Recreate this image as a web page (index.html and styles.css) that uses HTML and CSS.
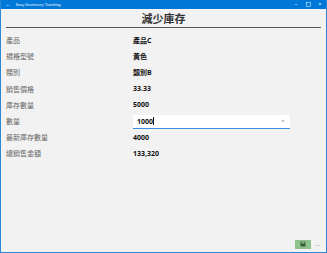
FILE: index.html
```html
<!doctype html>
<html>

<head>
	<meta charset="UTF-8">
	<title>減少庫存</title>
	<link rel="stylesheet" href="styles.css">
</head>

<body>
	<div class="window">
		<div class="titlebar">
			<span class="back">&#8592;</span>
			<span class="app_name">Easy Inventory Tracking</span>
			<span class="caption_btns">
				<span class="cap">&#8211;</span>
				<span class="cap"><svg width="5" height="5" viewBox="0 0 10 10"><rect x="1" y="1" width="8" height="8" fill="none" stroke="#fff" stroke-width="1"/></svg></span>
				<span class="cap">&#215;</span>
			</span>
		</div>
		<div class="page">
			<h2>減少庫存</h2>
			<div class="rows">
				<div class="row"><span class="lbl">產品</span><span class="val">產品C</span></div>
				<div class="row"><span class="lbl">規格型號</span><span class="val">黃色</span></div>
				<div class="row"><span class="lbl">類別</span><span class="val">類別B</span></div>
				<div class="row"><span class="lbl">銷售價格</span><span class="val">33.33</span></div>
				<div class="row"><span class="lbl">庫存數量</span><span class="val">5000</span></div>
				<div class="row"><span class="lbl">數量</span>
					<div class="txt_box"><span class="txt">1000</span><span class="caret"></span><span class="clear">&#215;</span></div>
				</div>
				<div class="row"><span class="lbl">最新庫存數量</span><span class="val">4000</span></div>
				<div class="row"><span class="lbl">總銷售金額</span><span class="val">133,320</span></div>
			</div>
		</div>
		<div class="cmdbar">
			<span class="save_btn">
				<svg width="6" height="6" viewBox="0 0 6 6"><rect x="0.5" y="0.5" width="5" height="5" fill="#3c5a3c"/><rect x="1.5" y="0.5" width="3" height="2" fill="#7fbf7f"/></svg>
			</span>
			<span class="more">...</span>
		</div>
	</div>
</body>

</html>
```

FILE: styles.css
```css
html,body {
	margin: 0;
	padding: 0;
}

body {
	font-family: "Noto Sans CJK TC", "Noto Sans", sans-serif;
	background: #f2f2f2;
}

.window {
	width: 325px;
	height: 252px;
	border: 1px solid #2b88d8;
	border-top: none;
	display: flex;
	flex-direction: column;
	background: #f2f2f2;
}

.titlebar {
	height: 9px;
	background: #0078d7;
	color: #fff;
	display: flex;
	align-items: center;
	font-family: "Noto Sans", sans-serif;
	font-size: 4px;
	line-height: 9px;
}

.back {
	width: 14px;
	text-align: center;
	font-size: 5px;
}

.app_name {
	flex: 1;
	padding-left: 1px;
}

.caption_btns {
	display: flex;
}

.cap {
	width: 12px;
	height: 9px;
	display: flex;
	justify-content: center;
	align-items: center;
	font-size: 5px;
}

.page {
	flex: 1;
	padding: 0 5px;
}

h2 {
	margin: 0;
	height: 18px;
	line-height: 18px;
	text-align: center;
	font-size: 11px;
	font-weight: bold;
	color: #333;
	border-bottom: 1.5px solid #555;
}

.rows {
	padding-top: 4px;
}

.row {
	height: 16.2px;
	display: flex;
	align-items: center;
	font-size: 7px;
}

.lbl {
	width: 127px;
	color: #666;
}

.val {
	font-family: "Noto Sans", "Noto Sans CJK TC", sans-serif;
	font-weight: bold;
	color: #111;
}

.txt_box {
	width: 157px;
	height: 14px;
	margin-top: 1px;
	box-sizing: border-box;
	background: #fff;
	border-bottom: 1px solid #3a8fe0;
	display: flex;
	align-items: center;
	padding-left: 4px;
	font-family: "Noto Sans", sans-serif;
	font-weight: bold;
	color: #111;
}

.caret {
	width: 0.5px;
	height: 8px;
	background: #111;
}

.txt {
	flex: none;
}

.clear {
	margin-left: auto;
	width: 14px;
	text-align: center;
	font-size: 5px;
	font-weight: normal;
	color: #777;
}

.cmdbar {
	height: 16px;
	display: flex;
	justify-content: flex-end;
	align-items: center;
	padding-right: 2px;
}

.save_btn {
	width: 16px;
	height: 9px;
	background: #8cc38c;
	display: flex;
	justify-content: center;
	align-items: center;
}

.more {
	width: 13px;
	text-align: center;
	font-family: "Noto Sans", sans-serif;
	font-size: 6px;
	line-height: 9px;
	color: #888;
}
```
